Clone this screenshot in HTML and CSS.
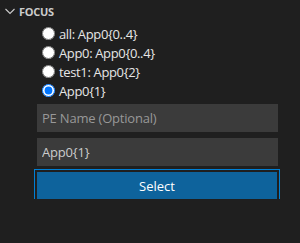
FILE: index.html
```html
<!DOCTYPE html>
<html lang="en">
<head>
    <meta charset="UTF-8">
    <meta name="viewport" content="width=device-width, initial-scale=1.0">
    <title>Focus</title>
    <link rel="stylesheet" href="styles.css">
</head>
<body>

    <!-- Pane header -->
    <div class="pane-header">
        <svg class="chevron" width="16" height="16" viewBox="0 0 16 16">
            <path d="M3.5 6 L8 10.5 L12.5 6" fill="none" stroke="#cccccc" stroke-width="1.1"/>
        </svg>
        <h3>Focus</h3>
    </div>

    <div class="focus-body">
        <!-- Focus choices -->
        <div class="choices">
            <label class="choice"><input type="radio" name="focus" value="all"> all: App0{0..4}</label>
            <label class="choice"><input type="radio" name="focus" value="App0"> App0: App0{0..4}</label>
            <label class="choice"><input type="radio" name="focus" value="test1"> test1: App0{2}</label>
            <label class="choice"><input type="radio" name="focus" value="App0{1}" checked> App0{1}</label>
        </div>

        <input type="text" class="text-field first" placeholder="PE Name (Optional)">
        <input type="text" class="text-field" value="App0{1}">

        <button class="select-btn">Select</button>
    </div>

</body>
</html>
```

FILE: styles.css
```css
* {
    margin: 0;
    padding: 0;
    box-sizing: border-box;
}

body {
    font-family: 'Open Sans', 'Noto Sans', sans-serif;
    font-size: 13px;
    background-color: #1f1f1f;
    color: #cccccc;
}

.pane-header {
    display: flex;
    align-items: center;
    height: 22px;
}

.chevron {
    margin-left: 2px;
}

.pane-header h3 {
    margin-left: 1px;
    font-size: 11px;
    font-weight: bold;
    text-transform: uppercase;
    letter-spacing: -0.3px;
    color: #cccccc;
}

.focus-body {
    padding: 2px 22px 0 37px;
}

.choices {
    display: flex;
    flex-direction: column;
}

.choice {
    display: flex;
    align-items: center;
    height: 19px;
    color: #e6e6e6;
    letter-spacing: -0.35px;
}

.choice input {
    margin: 0 4px 0 5px;
    width: 13px;
    height: 13px;
}

.text-field {
    display: block;
    width: 241px;
    height: 28px;
    margin-top: 6px;
    padding: 0 5px;
    background-color: #3b3b3b;
    color: #cccccc;
    border: none;
    outline: none;
    font-family: inherit;
    font-size: 13px;
    letter-spacing: -0.2px;
}

.text-field.first {
    margin-top: 4px;
}

.text-field::placeholder {
    color: #989898;
}

.select-btn {
    display: block;
    width: 240px;
    height: 27px;
    margin-top: 6px;
    background-color: #0e639c;
    color: #ffffff;
    border: none;
    outline: 1px solid #007fd4;
    outline-offset: 2px;
    font-family: inherit;
    font-size: 13px;
    cursor: pointer;
}

.select-btn:hover {
    background-color: #1177bb;
}
```
